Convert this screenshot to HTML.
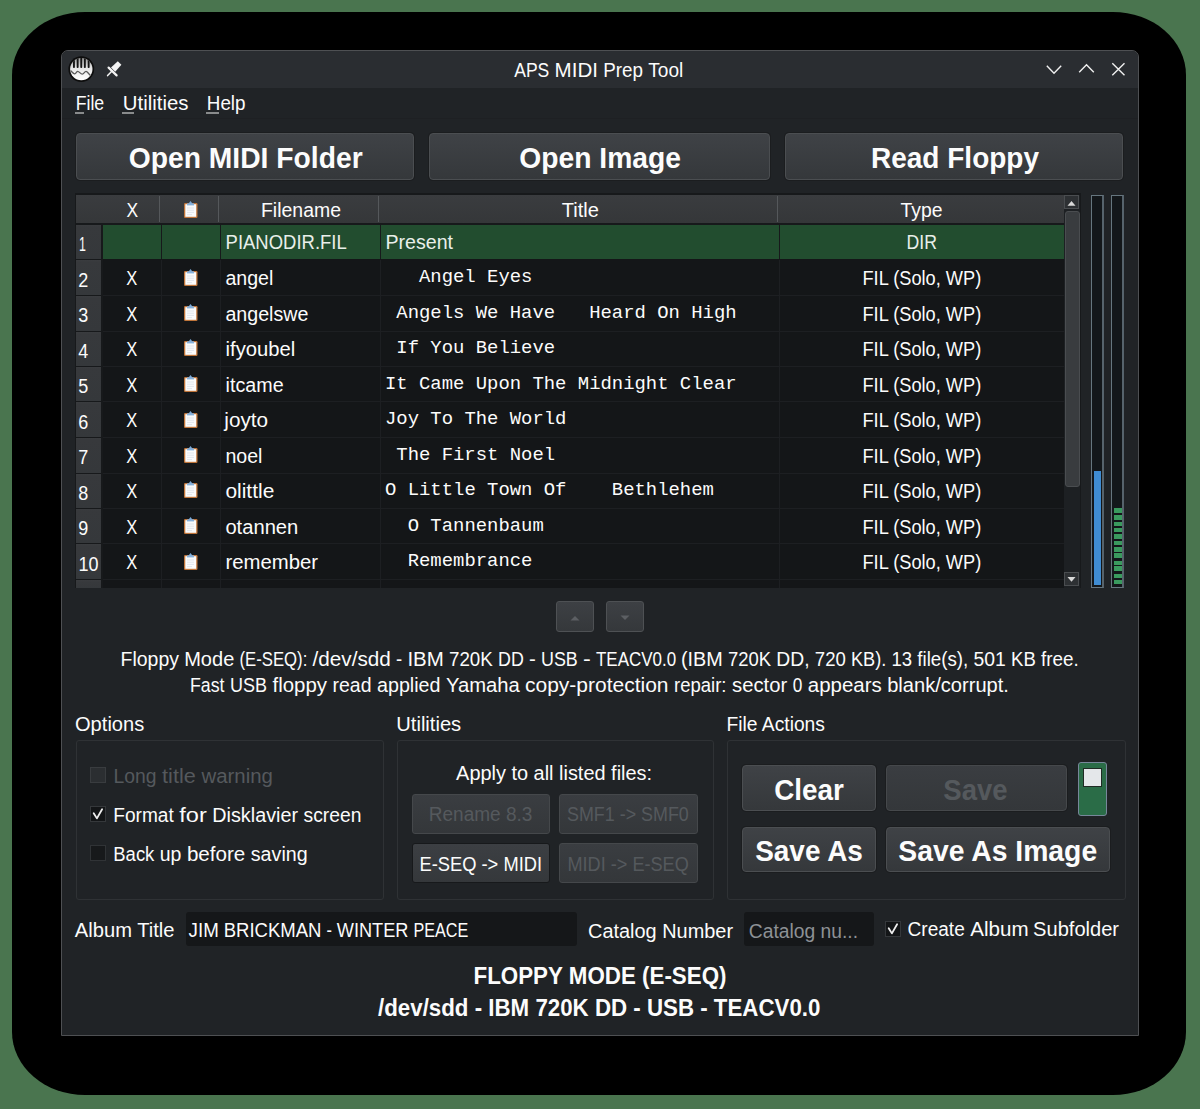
<!DOCTYPE html>
<html><head><meta charset="utf-8">
<style>
*{box-sizing:border-box;margin:0;padding:0}
html,body{width:1200px;height:1109px;overflow:hidden;background:#4a754f}
body{position:relative;font-family:"Liberation Sans",sans-serif}
.a{position:absolute}
svg text{white-space:pre}
</style></head><body>
<div class="a" style="left:12px;top:12px;width:1174px;height:1083px;background:#000;border-radius:73px/63px"></div>
<div class="a" style="left:61px;top:50px;width:1078px;height:986px;background:#202326;border:1px solid #4e5053;border-radius:7px 7px 0 0"></div>
<div class="a" style="left:62px;top:51px;width:1076px;height:37px;background:#2a2d31;border-radius:6px 6px 0 0"></div>
<div class="a" style="left:62px;top:118px;width:1076px;height:1px;background:#1e2023"></div>
<div class="a" style="left:75px;top:112px;width:9px;height:2px;background:#d0d0d0;opacity:0.6"></div>
<div class="a" style="left:122px;top:112px;width:12px;height:2px;background:#d0d0d0;opacity:0.6"></div>
<div class="a" style="left:206px;top:112px;width:13px;height:2px;background:#d0d0d0;opacity:0.6"></div>
<div class="a" style="left:76px;top:133px;width:338px;height:47px;border:1px solid #4b4e51;border-radius:4px;background:linear-gradient(#3f4246,#35383b);box-shadow:0 0 0 1px #1b1d1f"></div>
<div class="a" style="left:429px;top:133px;width:341px;height:47px;border:1px solid #4b4e51;border-radius:4px;background:linear-gradient(#3f4246,#35383b);box-shadow:0 0 0 1px #1b1d1f"></div>
<div class="a" style="left:785px;top:133px;width:338px;height:47px;border:1px solid #4b4e51;border-radius:4px;background:linear-gradient(#3f4246,#35383b);box-shadow:0 0 0 1px #1b1d1f"></div>
<div class="a" style="left:75px;top:193px;width:1006px;height:395px;background:#17191b"></div>
<div class="a" style="left:76px;top:195px;width:988px;height:28px;background:linear-gradient(#3a3c3f,#353739)"></div>
<div class="a" style="left:159px;top:196px;width:1px;height:26px;background:#55585b"></div>
<div class="a" style="left:218px;top:196px;width:1px;height:26px;background:#55585b"></div>
<div class="a" style="left:378px;top:196px;width:1px;height:26px;background:#55585b"></div>
<div class="a" style="left:777px;top:196px;width:1px;height:26px;background:#55585b"></div>
<div class="a" style="left:103px;top:225px;width:961px;height:363px;background:#141618"></div>
<div class="a" style="left:76px;top:225px;width:25px;height:34px;background:linear-gradient(#3a3c3f 0,#37393c 2px,#35383b)"></div>
<div class="a" style="left:103px;top:225px;width:961px;height:34px;background:#224d2f"></div>
<div class="a" style="left:161px;top:225px;width:1px;height:34px;background:#17191b"></div>
<div class="a" style="left:220px;top:225px;width:1px;height:34px;background:#17191b"></div>
<div class="a" style="left:380px;top:225px;width:1px;height:34px;background:#17191b"></div>
<div class="a" style="left:779px;top:225px;width:1px;height:34px;background:#17191b"></div>
<div class="a" style="left:76px;top:260px;width:25px;height:35px;background:linear-gradient(#3a3c3f 0,#37393c 2px,#35383b)"></div>
<div class="a" style="left:103px;top:295px;width:961px;height:1px;background:#1d1f22"></div>
<div class="a" style="left:161px;top:260px;width:1px;height:36px;background:#1d1f22"></div>
<div class="a" style="left:220px;top:260px;width:1px;height:36px;background:#1d1f22"></div>
<div class="a" style="left:380px;top:260px;width:1px;height:36px;background:#1d1f22"></div>
<div class="a" style="left:779px;top:260px;width:1px;height:36px;background:#1d1f22"></div>
<div class="a" style="left:76px;top:296px;width:25px;height:35px;background:linear-gradient(#3a3c3f 0,#37393c 2px,#35383b)"></div>
<div class="a" style="left:103px;top:331px;width:961px;height:1px;background:#1d1f22"></div>
<div class="a" style="left:161px;top:296px;width:1px;height:36px;background:#1d1f22"></div>
<div class="a" style="left:220px;top:296px;width:1px;height:36px;background:#1d1f22"></div>
<div class="a" style="left:380px;top:296px;width:1px;height:36px;background:#1d1f22"></div>
<div class="a" style="left:779px;top:296px;width:1px;height:36px;background:#1d1f22"></div>
<div class="a" style="left:76px;top:332px;width:25px;height:34px;background:linear-gradient(#3a3c3f 0,#37393c 2px,#35383b)"></div>
<div class="a" style="left:103px;top:366px;width:961px;height:1px;background:#1d1f22"></div>
<div class="a" style="left:161px;top:332px;width:1px;height:35px;background:#1d1f22"></div>
<div class="a" style="left:220px;top:332px;width:1px;height:35px;background:#1d1f22"></div>
<div class="a" style="left:380px;top:332px;width:1px;height:35px;background:#1d1f22"></div>
<div class="a" style="left:779px;top:332px;width:1px;height:35px;background:#1d1f22"></div>
<div class="a" style="left:76px;top:367px;width:25px;height:34px;background:linear-gradient(#3a3c3f 0,#37393c 2px,#35383b)"></div>
<div class="a" style="left:103px;top:401px;width:961px;height:1px;background:#1d1f22"></div>
<div class="a" style="left:161px;top:367px;width:1px;height:35px;background:#1d1f22"></div>
<div class="a" style="left:220px;top:367px;width:1px;height:35px;background:#1d1f22"></div>
<div class="a" style="left:380px;top:367px;width:1px;height:35px;background:#1d1f22"></div>
<div class="a" style="left:779px;top:367px;width:1px;height:35px;background:#1d1f22"></div>
<div class="a" style="left:76px;top:402px;width:25px;height:35px;background:linear-gradient(#3a3c3f 0,#37393c 2px,#35383b)"></div>
<div class="a" style="left:103px;top:437px;width:961px;height:1px;background:#1d1f22"></div>
<div class="a" style="left:161px;top:402px;width:1px;height:36px;background:#1d1f22"></div>
<div class="a" style="left:220px;top:402px;width:1px;height:36px;background:#1d1f22"></div>
<div class="a" style="left:380px;top:402px;width:1px;height:36px;background:#1d1f22"></div>
<div class="a" style="left:779px;top:402px;width:1px;height:36px;background:#1d1f22"></div>
<div class="a" style="left:76px;top:438px;width:25px;height:35px;background:linear-gradient(#3a3c3f 0,#37393c 2px,#35383b)"></div>
<div class="a" style="left:103px;top:473px;width:961px;height:1px;background:#1d1f22"></div>
<div class="a" style="left:161px;top:438px;width:1px;height:36px;background:#1d1f22"></div>
<div class="a" style="left:220px;top:438px;width:1px;height:36px;background:#1d1f22"></div>
<div class="a" style="left:380px;top:438px;width:1px;height:36px;background:#1d1f22"></div>
<div class="a" style="left:779px;top:438px;width:1px;height:36px;background:#1d1f22"></div>
<div class="a" style="left:76px;top:474px;width:25px;height:34px;background:linear-gradient(#3a3c3f 0,#37393c 2px,#35383b)"></div>
<div class="a" style="left:103px;top:508px;width:961px;height:1px;background:#1d1f22"></div>
<div class="a" style="left:161px;top:474px;width:1px;height:35px;background:#1d1f22"></div>
<div class="a" style="left:220px;top:474px;width:1px;height:35px;background:#1d1f22"></div>
<div class="a" style="left:380px;top:474px;width:1px;height:35px;background:#1d1f22"></div>
<div class="a" style="left:779px;top:474px;width:1px;height:35px;background:#1d1f22"></div>
<div class="a" style="left:76px;top:509px;width:25px;height:34px;background:linear-gradient(#3a3c3f 0,#37393c 2px,#35383b)"></div>
<div class="a" style="left:103px;top:543px;width:961px;height:1px;background:#1d1f22"></div>
<div class="a" style="left:161px;top:509px;width:1px;height:35px;background:#1d1f22"></div>
<div class="a" style="left:220px;top:509px;width:1px;height:35px;background:#1d1f22"></div>
<div class="a" style="left:380px;top:509px;width:1px;height:35px;background:#1d1f22"></div>
<div class="a" style="left:779px;top:509px;width:1px;height:35px;background:#1d1f22"></div>
<div class="a" style="left:76px;top:544px;width:25px;height:35px;background:linear-gradient(#3a3c3f 0,#37393c 2px,#35383b)"></div>
<div class="a" style="left:103px;top:579px;width:961px;height:1px;background:#1d1f22"></div>
<div class="a" style="left:161px;top:544px;width:1px;height:36px;background:#1d1f22"></div>
<div class="a" style="left:220px;top:544px;width:1px;height:36px;background:#1d1f22"></div>
<div class="a" style="left:380px;top:544px;width:1px;height:36px;background:#1d1f22"></div>
<div class="a" style="left:779px;top:544px;width:1px;height:36px;background:#1d1f22"></div>
<div class="a" style="left:76px;top:580px;width:25px;height:8px;background:linear-gradient(#3a3c3f 0,#37393c 2px,#35383b)"></div>
<div class="a" style="left:161px;top:580px;width:1px;height:8px;background:#1d1f22"></div>
<div class="a" style="left:220px;top:580px;width:1px;height:8px;background:#1d1f22"></div>
<div class="a" style="left:380px;top:580px;width:1px;height:8px;background:#1d1f22"></div>
<div class="a" style="left:779px;top:580px;width:1px;height:8px;background:#1d1f22"></div>
<div class="a" style="left:1064px;top:195px;width:16px;height:393px;background:#1d2023"></div>
<div class="a" style="left:1064px;top:195px;width:15px;height:14px;background:#2d3033;border:1px solid #4a4d50"></div>
<div class="a" style="left:1065px;top:211px;width:15px;height:276px;background:#393c3f;border:1px solid #4a4d50;border-radius:3px"></div>
<div class="a" style="left:1064px;top:572px;width:15px;height:14px;background:#2d3033;border:1px solid #4a4d50"></div>
<div class="a" style="left:1091px;top:195px;width:13px;height:393px;background:#13171a;border:1px solid #66767f;border-right:2px solid #56636c"></div>
<div class="a" style="left:1111px;top:195px;width:13px;height:393px;background:#13171a;border:1px solid #66767f;border-right:2px solid #56636c"></div>
<div class="a" style="left:1094px;top:471px;width:7px;height:114px;background:#3f8cd2"></div>
<div class="a" style="left:1114px;top:508px;width:8px;height:5px;background:#3a9a5e"></div>
<div class="a" style="left:1114px;top:515px;width:8px;height:5px;background:#3a9a5e"></div>
<div class="a" style="left:1114px;top:522px;width:8px;height:4px;background:#3a9a5e"></div>
<div class="a" style="left:1114px;top:528px;width:8px;height:4px;background:#3a9a5e"></div>
<div class="a" style="left:1114px;top:534px;width:8px;height:5px;background:#3a9a5e"></div>
<div class="a" style="left:1114px;top:541px;width:8px;height:4px;background:#3a9a5e"></div>
<div class="a" style="left:1114px;top:547px;width:8px;height:5px;background:#3a9a5e"></div>
<div class="a" style="left:1114px;top:553px;width:8px;height:5px;background:#3a9a5e"></div>
<div class="a" style="left:1114px;top:561px;width:8px;height:4px;background:#3a9a5e"></div>
<div class="a" style="left:1114px;top:566px;width:8px;height:5px;background:#3a9a5e"></div>
<div class="a" style="left:1114px;top:574px;width:8px;height:4px;background:#3a9a5e"></div>
<div class="a" style="left:1114px;top:580px;width:8px;height:4px;background:#3a9a5e"></div>
<div class="a" style="left:556px;top:601px;width:38px;height:31px;border:1px solid #4e5154;border-radius:3px;background:linear-gradient(#3d4044,#35383b)"></div>
<div class="a" style="left:606px;top:601px;width:38px;height:31px;border:1px solid #4e5154;border-radius:3px;background:linear-gradient(#3d4044,#35383b)"></div>
<div class="a" style="left:76px;top:740px;width:308px;height:160px;border:1px solid #2f3235;border-radius:3px"></div>
<div class="a" style="left:397px;top:740px;width:317px;height:160px;border:1px solid #2f3235;border-radius:3px"></div>
<div class="a" style="left:727px;top:740px;width:399px;height:160px;border:1px solid #2f3235;border-radius:3px"></div>
<div class="a" style="left:90px;top:767px;width:16px;height:16px;background:#2b2e31;border:1px solid #393c3f"></div>
<div class="a" style="left:90px;top:806px;width:16px;height:16px;background:#131517;border:1px solid #35383b"></div>
<div class="a" style="left:90px;top:845px;width:16px;height:16px;background:#17191b;border:1px solid #303336"></div>
<div class="a" style="left:412px;top:794px;width:138px;height:40px;border:1px solid #45484b;border-radius:3px;background:linear-gradient(#3a3d41,#34373a)"></div>
<div class="a" style="left:559px;top:794px;width:139px;height:40px;border:1px solid #45484b;border-radius:3px;background:linear-gradient(#3a3d41,#34373a)"></div>
<div class="a" style="left:412px;top:843px;width:138px;height:40px;border:1px solid #17191b;border-radius:3px;background:linear-gradient(#3c3f43,#35383b)"></div>
<div class="a" style="left:559px;top:843px;width:139px;height:40px;border:1px solid #45484b;border-radius:3px;background:linear-gradient(#3a3d41,#34373a)"></div>
<div class="a" style="left:742px;top:765px;width:134px;height:46px;border:1px solid #4b4e51;border-radius:4px;background:linear-gradient(#3f4246,#35383b);box-shadow:0 0 0 1px #1b1d1f"></div>
<div class="a" style="left:886px;top:765px;width:181px;height:46px;border:1px solid #45484b;border-radius:4px;background:linear-gradient(#3a3d41,#34373a);box-shadow:0 0 0 1px #1b1d1f"></div>
<div class="a" style="left:742px;top:827px;width:134px;height:45px;border:1px solid #4b4e51;border-radius:4px;background:linear-gradient(#3f4246,#35383b);box-shadow:0 0 0 1px #1b1d1f"></div>
<div class="a" style="left:886px;top:827px;width:224px;height:45px;border:1px solid #4b4e51;border-radius:4px;background:linear-gradient(#3f4246,#35383b);box-shadow:0 0 0 1px #1b1d1f"></div>
<div class="a" style="left:1078px;top:762px;width:29px;height:54px;background:#2a6c47;border:1px solid #77879a;border-radius:3px"></div>
<div class="a" style="left:1083px;top:768px;width:19px;height:19px;background:#e4e7ea;border:1px solid #1f2a24"></div>
<div class="a" style="left:186px;top:912px;width:391px;height:34px;background:#151719;border-radius:3px"></div>
<div class="a" style="left:744px;top:912px;width:130px;height:34px;background:#151719;border-radius:3px"></div>
<div class="a" style="left:885px;top:921px;width:16px;height:16px;background:#131517;border:1px solid #35383b"></div>
<svg class="a" style="left:67px;top:55px" width="28" height="28" viewBox="0 0 28 28">
<defs><linearGradient id="ig" x1="0" y1="0" x2="0" y2="1"><stop offset="0" stop-color="#9c9c9c"/><stop offset="0.45" stop-color="#e6e6e6"/><stop offset="1" stop-color="#ffffff"/></linearGradient>
<clipPath id="cp"><circle cx="14.3" cy="14.1" r="11.2"/></clipPath></defs>
<circle cx="14.3" cy="14.1" r="12.9" fill="#0d0d0d"/>
<circle cx="14.3" cy="14.1" r="11.2" fill="url(#ig)"/>
<g clip-path="url(#cp)" fill="#151515"><rect x="6" y="2" width="1.9" height="11" rx="0.8"/><rect x="9.7" y="2" width="1.9" height="11" rx="0.8"/><rect x="13.3" y="2" width="1.9" height="11" rx="0.8"/><rect x="16.9" y="2" width="1.9" height="11" rx="0.8"/><rect x="20.7" y="2" width="1.9" height="11" rx="0.8"/></g>
<path clip-path="url(#cp)" d="M3.5 15.5 C5.5 17.5 6.5 19 7.7 18.8 C9 18.6 9.5 16.3 10.8 16.3 C12.2 16.3 13.5 19.2 15.3 19.2 C17 19.2 17.5 16.3 19 16.3 C20.5 16.3 21.5 19 23.8 20.8" fill="none" stroke="#5a5a5a" stroke-width="1.3"/>
</svg>
<svg class="a" style="left:105px;top:59px" width="18" height="19" viewBox="0 0 18 19">
<path d="M7.3 11.7 L2.6 16.6" stroke="#f4f4f4" stroke-width="1.5" stroke-linecap="round"/>
<path d="M3.6 8.6 L11.6 16.4" stroke="#f4f4f4" stroke-width="2.2" stroke-linecap="round"/>
<path d="M12.8 2.2 L16.4 5.8 L10.2 12.8 L6 8.6 Z" fill="#f4f4f4"/>
</svg>
<svg class="a" style="left:1040px;top:58px" width="95" height="24" viewBox="0 0 95 24"><path d="M6.8 7.8 L14 15.3 L21.2 7.8" fill="none" stroke="#f0f0f0" stroke-width="1.4"/><path d="M39.2 14.2 L46.5 6.8 L53.8 14.2" fill="none" stroke="#f0f0f0" stroke-width="1.4"/><path d="M72.3 5.3 L84.5 17.3 M84.5 5.3 L72.3 17.3" fill="none" stroke="#f0f0f0" stroke-width="1.4"/></svg>
<svg class="a" style="left:183px;top:200px" width="15" height="19" viewBox="0 0 15 19">
<rect x="1" y="3" width="13.5" height="15" rx="1.2" fill="#c0753a"/>
<rect x="2.3" y="4.2" width="10.9" height="12.6" fill="#fbfbfb"/>
<path d="M4.5 5 L7.5 1 L10.5 5 Z" fill="#7aa7d6"/><rect x="4" y="3.4" width="7" height="2" fill="#86b1dc"/>
<g stroke="#d5dde6" stroke-width="0.7"><line x1="4" y1="8" x2="11" y2="8"/><line x1="4" y1="10.2" x2="11" y2="10.2"/><line x1="4" y1="12.4" x2="11" y2="12.4"/><line x1="4" y1="14.6" x2="9" y2="14.6"/></g>
</svg>
<svg class="a" style="left:183px;top:268px" width="15" height="19" viewBox="0 0 15 19">
<rect x="1" y="3" width="13.5" height="15" rx="1.2" fill="#c0753a"/>
<rect x="2.3" y="4.2" width="10.9" height="12.6" fill="#fbfbfb"/>
<path d="M4.5 5 L7.5 1 L10.5 5 Z" fill="#7aa7d6"/><rect x="4" y="3.4" width="7" height="2" fill="#86b1dc"/>
<g stroke="#d5dde6" stroke-width="0.7"><line x1="4" y1="8" x2="11" y2="8"/><line x1="4" y1="10.2" x2="11" y2="10.2"/><line x1="4" y1="12.4" x2="11" y2="12.4"/><line x1="4" y1="14.6" x2="9" y2="14.6"/></g>
</svg>
<svg class="a" style="left:183px;top:303px" width="15" height="19" viewBox="0 0 15 19">
<rect x="1" y="3" width="13.5" height="15" rx="1.2" fill="#c0753a"/>
<rect x="2.3" y="4.2" width="10.9" height="12.6" fill="#fbfbfb"/>
<path d="M4.5 5 L7.5 1 L10.5 5 Z" fill="#7aa7d6"/><rect x="4" y="3.4" width="7" height="2" fill="#86b1dc"/>
<g stroke="#d5dde6" stroke-width="0.7"><line x1="4" y1="8" x2="11" y2="8"/><line x1="4" y1="10.2" x2="11" y2="10.2"/><line x1="4" y1="12.4" x2="11" y2="12.4"/><line x1="4" y1="14.6" x2="9" y2="14.6"/></g>
</svg>
<svg class="a" style="left:183px;top:338px" width="15" height="19" viewBox="0 0 15 19">
<rect x="1" y="3" width="13.5" height="15" rx="1.2" fill="#c0753a"/>
<rect x="2.3" y="4.2" width="10.9" height="12.6" fill="#fbfbfb"/>
<path d="M4.5 5 L7.5 1 L10.5 5 Z" fill="#7aa7d6"/><rect x="4" y="3.4" width="7" height="2" fill="#86b1dc"/>
<g stroke="#d5dde6" stroke-width="0.7"><line x1="4" y1="8" x2="11" y2="8"/><line x1="4" y1="10.2" x2="11" y2="10.2"/><line x1="4" y1="12.4" x2="11" y2="12.4"/><line x1="4" y1="14.6" x2="9" y2="14.6"/></g>
</svg>
<svg class="a" style="left:183px;top:374px" width="15" height="19" viewBox="0 0 15 19">
<rect x="1" y="3" width="13.5" height="15" rx="1.2" fill="#c0753a"/>
<rect x="2.3" y="4.2" width="10.9" height="12.6" fill="#fbfbfb"/>
<path d="M4.5 5 L7.5 1 L10.5 5 Z" fill="#7aa7d6"/><rect x="4" y="3.4" width="7" height="2" fill="#86b1dc"/>
<g stroke="#d5dde6" stroke-width="0.7"><line x1="4" y1="8" x2="11" y2="8"/><line x1="4" y1="10.2" x2="11" y2="10.2"/><line x1="4" y1="12.4" x2="11" y2="12.4"/><line x1="4" y1="14.6" x2="9" y2="14.6"/></g>
</svg>
<svg class="a" style="left:183px;top:410px" width="15" height="19" viewBox="0 0 15 19">
<rect x="1" y="3" width="13.5" height="15" rx="1.2" fill="#c0753a"/>
<rect x="2.3" y="4.2" width="10.9" height="12.6" fill="#fbfbfb"/>
<path d="M4.5 5 L7.5 1 L10.5 5 Z" fill="#7aa7d6"/><rect x="4" y="3.4" width="7" height="2" fill="#86b1dc"/>
<g stroke="#d5dde6" stroke-width="0.7"><line x1="4" y1="8" x2="11" y2="8"/><line x1="4" y1="10.2" x2="11" y2="10.2"/><line x1="4" y1="12.4" x2="11" y2="12.4"/><line x1="4" y1="14.6" x2="9" y2="14.6"/></g>
</svg>
<svg class="a" style="left:183px;top:445px" width="15" height="19" viewBox="0 0 15 19">
<rect x="1" y="3" width="13.5" height="15" rx="1.2" fill="#c0753a"/>
<rect x="2.3" y="4.2" width="10.9" height="12.6" fill="#fbfbfb"/>
<path d="M4.5 5 L7.5 1 L10.5 5 Z" fill="#7aa7d6"/><rect x="4" y="3.4" width="7" height="2" fill="#86b1dc"/>
<g stroke="#d5dde6" stroke-width="0.7"><line x1="4" y1="8" x2="11" y2="8"/><line x1="4" y1="10.2" x2="11" y2="10.2"/><line x1="4" y1="12.4" x2="11" y2="12.4"/><line x1="4" y1="14.6" x2="9" y2="14.6"/></g>
</svg>
<svg class="a" style="left:183px;top:480px" width="15" height="19" viewBox="0 0 15 19">
<rect x="1" y="3" width="13.5" height="15" rx="1.2" fill="#c0753a"/>
<rect x="2.3" y="4.2" width="10.9" height="12.6" fill="#fbfbfb"/>
<path d="M4.5 5 L7.5 1 L10.5 5 Z" fill="#7aa7d6"/><rect x="4" y="3.4" width="7" height="2" fill="#86b1dc"/>
<g stroke="#d5dde6" stroke-width="0.7"><line x1="4" y1="8" x2="11" y2="8"/><line x1="4" y1="10.2" x2="11" y2="10.2"/><line x1="4" y1="12.4" x2="11" y2="12.4"/><line x1="4" y1="14.6" x2="9" y2="14.6"/></g>
</svg>
<svg class="a" style="left:183px;top:516px" width="15" height="19" viewBox="0 0 15 19">
<rect x="1" y="3" width="13.5" height="15" rx="1.2" fill="#c0753a"/>
<rect x="2.3" y="4.2" width="10.9" height="12.6" fill="#fbfbfb"/>
<path d="M4.5 5 L7.5 1 L10.5 5 Z" fill="#7aa7d6"/><rect x="4" y="3.4" width="7" height="2" fill="#86b1dc"/>
<g stroke="#d5dde6" stroke-width="0.7"><line x1="4" y1="8" x2="11" y2="8"/><line x1="4" y1="10.2" x2="11" y2="10.2"/><line x1="4" y1="12.4" x2="11" y2="12.4"/><line x1="4" y1="14.6" x2="9" y2="14.6"/></g>
</svg>
<svg class="a" style="left:183px;top:552px" width="15" height="19" viewBox="0 0 15 19">
<rect x="1" y="3" width="13.5" height="15" rx="1.2" fill="#c0753a"/>
<rect x="2.3" y="4.2" width="10.9" height="12.6" fill="#fbfbfb"/>
<path d="M4.5 5 L7.5 1 L10.5 5 Z" fill="#7aa7d6"/><rect x="4" y="3.4" width="7" height="2" fill="#86b1dc"/>
<g stroke="#d5dde6" stroke-width="0.7"><line x1="4" y1="8" x2="11" y2="8"/><line x1="4" y1="10.2" x2="11" y2="10.2"/><line x1="4" y1="12.4" x2="11" y2="12.4"/><line x1="4" y1="14.6" x2="9" y2="14.6"/></g>
</svg>
<svg class="a" style="left:1064px;top:195px" width="15" height="14"><path d="M3.5 10.8 L7.5 6 L11.5 10.8 Z" fill="#d9d9d9"/></svg>
<svg class="a" style="left:1064px;top:572px" width="15" height="14"><path d="M3.5 5 L7.5 9.8 L11.5 5 Z" fill="#d9d9d9"/></svg>
<svg class="a" style="left:556px;top:601px" width="88" height="31"><path d="M14.5 19.5 L19 15 L23.5 19.5 Z" fill="#5c5f63"/><path d="M64.5 14.5 L69 19 L73.5 14.5 Z" fill="#5c5f63"/></svg>
<svg class="a" style="left:90px;top:806px" width="16" height="16"><path d="M3.7 7.2 L6.9 12.4 L12.1 3.3" fill="none" stroke="#eeeeee" stroke-width="1.8" stroke-linecap="round" stroke-linejoin="round"/></svg>
<svg class="a" style="left:885px;top:921px" width="16" height="16"><path d="M3.7 7.2 L6.9 12.4 L12.1 3.3" fill="none" stroke="#eeeeee" stroke-width="1.8" stroke-linecap="round" stroke-linejoin="round"/></svg>
<svg class="a" style="left:0;top:0" width="1200" height="1109">
<text x="514.20" y="77.10" font-family="Liberation Sans" font-size="20.5" fill="#fcfcfc" textLength="35.11" lengthAdjust="spacingAndGlyphs">APS</text>
<text x="554.60" y="77.10" font-family="Liberation Sans" font-size="20.5" fill="#fcfcfc" textLength="43.41" lengthAdjust="spacingAndGlyphs">MIDI</text>
<text x="603.30" y="77.10" font-family="Liberation Sans" font-size="20.5" fill="#fcfcfc" textLength="39.71" lengthAdjust="spacingAndGlyphs">Prep</text>
<text x="648.30" y="77.10" font-family="Liberation Sans" font-size="20.5" fill="#fcfcfc" textLength="34.99" lengthAdjust="spacingAndGlyphs">Tool</text>
<text x="75.70" y="109.80" font-family="Liberation Sans" font-size="19.6" fill="#fcfcfc" textLength="28.52" lengthAdjust="spacingAndGlyphs">File</text>
<text x="122.80" y="109.80" font-family="Liberation Sans" font-size="19.6" fill="#fcfcfc" textLength="65.65" lengthAdjust="spacingAndGlyphs">Utilities</text>
<text x="206.80" y="109.80" font-family="Liberation Sans" font-size="19.6" fill="#fcfcfc" textLength="38.73" lengthAdjust="spacingAndGlyphs">Help</text>
<text x="128.75" y="167.80" font-family="Liberation Sans" font-size="29.8" font-weight="bold" fill="#fcfcfc" textLength="233.89" lengthAdjust="spacingAndGlyphs">Open MIDI Folder</text>
<text x="519.30" y="167.80" font-family="Liberation Sans" font-size="29.8" font-weight="bold" fill="#fcfcfc" textLength="161.66" lengthAdjust="spacingAndGlyphs">Open Image</text>
<text x="871.00" y="167.80" font-family="Liberation Sans" font-size="29.8" font-weight="bold" fill="#fcfcfc" textLength="168.02" lengthAdjust="spacingAndGlyphs">Read Floppy</text>
<text x="126.40" y="217.40" font-family="Liberation Sans" font-size="19.6" fill="#fcfcfc" textLength="11.64" lengthAdjust="spacingAndGlyphs">X</text>
<text x="261.00" y="217.40" font-family="Liberation Sans" font-size="19.6" fill="#fcfcfc" textLength="79.96" lengthAdjust="spacingAndGlyphs">Filename</text>
<text x="561.70" y="217.40" font-family="Liberation Sans" font-size="19.6" fill="#fcfcfc" textLength="37.14" lengthAdjust="spacingAndGlyphs">Title</text>
<text x="900.50" y="217.40" font-family="Liberation Sans" font-size="19.6" fill="#fcfcfc" textLength="41.96" lengthAdjust="spacingAndGlyphs">Type</text>
<text x="79.00" y="251.00" font-family="Liberation Sans" font-size="19.6" fill="#fcfcfc" textLength="6.91" lengthAdjust="spacingAndGlyphs">1</text>
<text x="225.60" y="249.00" font-family="Liberation Sans" font-size="19.6" fill="#e9efea" textLength="121.13" lengthAdjust="spacingAndGlyphs">PIANODIR.FIL</text>
<text x="385.50" y="249.00" font-family="Liberation Sans" font-size="19.6" fill="#e9efea" textLength="67.55" lengthAdjust="spacingAndGlyphs">Present</text>
<text x="906.50" y="249.00" font-family="Liberation Sans" font-size="19.6" fill="#e9efea" textLength="30.44" lengthAdjust="spacingAndGlyphs">DIR</text>
<text x="78.30" y="286.50" font-family="Liberation Sans" font-size="19.6" fill="#fcfcfc" textLength="10.02" lengthAdjust="spacingAndGlyphs">2</text>
<text x="126.30" y="285.00" font-family="Liberation Sans" font-size="19.6" fill="#fcfcfc" textLength="11.03" lengthAdjust="spacingAndGlyphs">X</text>
<text x="225.40" y="285.00" font-family="Liberation Sans" font-size="19.6" fill="#fcfcfc" textLength="47.94" lengthAdjust="spacingAndGlyphs">angel</text>
<text x="419.02" y="282.30" font-family="Liberation Mono" font-size="18.9" fill="#fcfcfc" textLength="113.41" lengthAdjust="spacingAndGlyphs">Angel Eyes</text>
<text x="862.50" y="285.00" font-family="Liberation Sans" font-size="19.6" fill="#fcfcfc" textLength="118.74" lengthAdjust="spacingAndGlyphs">FIL (Solo, WP)</text>
<text x="78.30" y="322.00" font-family="Liberation Sans" font-size="19.6" fill="#fcfcfc" textLength="10.02" lengthAdjust="spacingAndGlyphs">3</text>
<text x="126.30" y="320.50" font-family="Liberation Sans" font-size="19.6" fill="#fcfcfc" textLength="11.03" lengthAdjust="spacingAndGlyphs">X</text>
<text x="225.40" y="320.50" font-family="Liberation Sans" font-size="19.6" fill="#fcfcfc" textLength="83.00" lengthAdjust="spacingAndGlyphs">angelswe</text>
<text x="396.34" y="317.80" font-family="Liberation Mono" font-size="18.9" fill="#fcfcfc" textLength="340.24" lengthAdjust="spacingAndGlyphs">Angels We Have   Heard On High</text>
<text x="862.50" y="320.50" font-family="Liberation Sans" font-size="19.6" fill="#fcfcfc" textLength="118.74" lengthAdjust="spacingAndGlyphs">FIL (Solo, WP)</text>
<text x="78.30" y="357.50" font-family="Liberation Sans" font-size="19.6" fill="#fcfcfc" textLength="10.02" lengthAdjust="spacingAndGlyphs">4</text>
<text x="126.30" y="356.00" font-family="Liberation Sans" font-size="19.6" fill="#fcfcfc" textLength="11.03" lengthAdjust="spacingAndGlyphs">X</text>
<text x="225.60" y="356.00" font-family="Liberation Sans" font-size="19.6" fill="#fcfcfc" textLength="69.74" lengthAdjust="spacingAndGlyphs">ifyoubel</text>
<text x="396.34" y="353.30" font-family="Liberation Mono" font-size="18.9" fill="#fcfcfc" textLength="158.78" lengthAdjust="spacingAndGlyphs">If You Believe</text>
<text x="862.50" y="356.00" font-family="Liberation Sans" font-size="19.6" fill="#fcfcfc" textLength="118.74" lengthAdjust="spacingAndGlyphs">FIL (Solo, WP)</text>
<text x="78.30" y="393.00" font-family="Liberation Sans" font-size="19.6" fill="#fcfcfc" textLength="10.02" lengthAdjust="spacingAndGlyphs">5</text>
<text x="126.30" y="391.50" font-family="Liberation Sans" font-size="19.6" fill="#fcfcfc" textLength="11.03" lengthAdjust="spacingAndGlyphs">X</text>
<text x="225.60" y="391.50" font-family="Liberation Sans" font-size="19.6" fill="#fcfcfc" textLength="58.01" lengthAdjust="spacingAndGlyphs">itcame</text>
<text x="385.00" y="388.80" font-family="Liberation Mono" font-size="18.9" fill="#fcfcfc" textLength="351.59" lengthAdjust="spacingAndGlyphs">It Came Upon The Midnight Clear</text>
<text x="862.50" y="391.50" font-family="Liberation Sans" font-size="19.6" fill="#fcfcfc" textLength="118.74" lengthAdjust="spacingAndGlyphs">FIL (Solo, WP)</text>
<text x="78.30" y="428.50" font-family="Liberation Sans" font-size="19.6" fill="#fcfcfc" textLength="10.02" lengthAdjust="spacingAndGlyphs">6</text>
<text x="126.30" y="427.00" font-family="Liberation Sans" font-size="19.6" fill="#fcfcfc" textLength="11.03" lengthAdjust="spacingAndGlyphs">X</text>
<text x="224.32" y="427.00" font-family="Liberation Sans" font-size="19.6" fill="#fcfcfc" textLength="43.73" lengthAdjust="spacingAndGlyphs">joyto</text>
<text x="385.00" y="424.30" font-family="Liberation Mono" font-size="18.9" fill="#fcfcfc" textLength="181.46" lengthAdjust="spacingAndGlyphs">Joy To The World</text>
<text x="862.50" y="427.00" font-family="Liberation Sans" font-size="19.6" fill="#fcfcfc" textLength="118.74" lengthAdjust="spacingAndGlyphs">FIL (Solo, WP)</text>
<text x="78.30" y="464.00" font-family="Liberation Sans" font-size="19.6" fill="#fcfcfc" textLength="10.02" lengthAdjust="spacingAndGlyphs">7</text>
<text x="126.30" y="462.50" font-family="Liberation Sans" font-size="19.6" fill="#fcfcfc" textLength="11.03" lengthAdjust="spacingAndGlyphs">X</text>
<text x="225.40" y="462.50" font-family="Liberation Sans" font-size="19.6" fill="#fcfcfc" textLength="37.01" lengthAdjust="spacingAndGlyphs">noel</text>
<text x="396.34" y="459.80" font-family="Liberation Mono" font-size="18.9" fill="#fcfcfc" textLength="158.78" lengthAdjust="spacingAndGlyphs">The First Noel</text>
<text x="862.50" y="462.50" font-family="Liberation Sans" font-size="19.6" fill="#fcfcfc" textLength="118.74" lengthAdjust="spacingAndGlyphs">FIL (Solo, WP)</text>
<text x="78.30" y="499.50" font-family="Liberation Sans" font-size="19.6" fill="#fcfcfc" textLength="10.02" lengthAdjust="spacingAndGlyphs">8</text>
<text x="126.30" y="498.00" font-family="Liberation Sans" font-size="19.6" fill="#fcfcfc" textLength="11.03" lengthAdjust="spacingAndGlyphs">X</text>
<text x="225.40" y="498.00" font-family="Liberation Sans" font-size="19.6" fill="#fcfcfc" textLength="48.89" lengthAdjust="spacingAndGlyphs">olittle</text>
<text x="385.00" y="495.30" font-family="Liberation Mono" font-size="18.9" fill="#fcfcfc" textLength="328.90" lengthAdjust="spacingAndGlyphs">O Little Town Of    Bethlehem</text>
<text x="862.50" y="498.00" font-family="Liberation Sans" font-size="19.6" fill="#fcfcfc" textLength="118.74" lengthAdjust="spacingAndGlyphs">FIL (Solo, WP)</text>
<text x="78.30" y="535.00" font-family="Liberation Sans" font-size="19.6" fill="#fcfcfc" textLength="10.02" lengthAdjust="spacingAndGlyphs">9</text>
<text x="126.30" y="533.50" font-family="Liberation Sans" font-size="19.6" fill="#fcfcfc" textLength="11.03" lengthAdjust="spacingAndGlyphs">X</text>
<text x="225.40" y="533.50" font-family="Liberation Sans" font-size="19.6" fill="#fcfcfc" textLength="72.90" lengthAdjust="spacingAndGlyphs">otannen</text>
<text x="407.68" y="530.80" font-family="Liberation Mono" font-size="18.9" fill="#fcfcfc" textLength="136.10" lengthAdjust="spacingAndGlyphs">O Tannenbaum</text>
<text x="862.50" y="533.50" font-family="Liberation Sans" font-size="19.6" fill="#fcfcfc" textLength="118.74" lengthAdjust="spacingAndGlyphs">FIL (Solo, WP)</text>
<text x="78.50" y="570.50" font-family="Liberation Sans" font-size="19.6" fill="#fcfcfc" textLength="20.04" lengthAdjust="spacingAndGlyphs">10</text>
<text x="126.30" y="569.00" font-family="Liberation Sans" font-size="19.6" fill="#fcfcfc" textLength="11.03" lengthAdjust="spacingAndGlyphs">X</text>
<text x="225.40" y="569.00" font-family="Liberation Sans" font-size="19.6" fill="#fcfcfc" textLength="92.64" lengthAdjust="spacingAndGlyphs">remember</text>
<text x="407.68" y="566.30" font-family="Liberation Mono" font-size="18.9" fill="#fcfcfc" textLength="124.76" lengthAdjust="spacingAndGlyphs">Remembrance</text>
<text x="862.50" y="569.00" font-family="Liberation Sans" font-size="19.6" fill="#fcfcfc" textLength="118.74" lengthAdjust="spacingAndGlyphs">FIL (Solo, WP)</text>
<text x="120.60" y="665.60" font-family="Liberation Sans" font-size="19.3" fill="#fcfcfc" textLength="58.39" lengthAdjust="spacingAndGlyphs">Floppy</text>
<text x="184.20" y="665.60" font-family="Liberation Sans" font-size="19.3" fill="#fcfcfc" textLength="50.09" lengthAdjust="spacingAndGlyphs">Mode</text>
<text x="239.50" y="665.60" font-family="Liberation Sans" font-size="19.3" fill="#fcfcfc" textLength="67.79" lengthAdjust="spacingAndGlyphs">(E-SEQ):</text>
<text x="312.50" y="665.60" font-family="Liberation Sans" font-size="19.3" fill="#fcfcfc" textLength="78.29" lengthAdjust="spacingAndGlyphs">/dev/sdd</text>
<text x="396.00" y="665.60" font-family="Liberation Sans" font-size="19.3" fill="#fcfcfc" textLength="6.19" lengthAdjust="spacingAndGlyphs">-</text>
<text x="407.40" y="665.60" font-family="Liberation Sans" font-size="19.3" fill="#fcfcfc" textLength="36.39" lengthAdjust="spacingAndGlyphs">IBM</text>
<text x="449.00" y="665.60" font-family="Liberation Sans" font-size="19.3" fill="#fcfcfc" textLength="43.79" lengthAdjust="spacingAndGlyphs">720K</text>
<text x="498.00" y="665.60" font-family="Liberation Sans" font-size="19.3" fill="#fcfcfc" textLength="25.79" lengthAdjust="spacingAndGlyphs">DD</text>
<text x="529.00" y="665.60" font-family="Liberation Sans" font-size="19.3" fill="#fcfcfc" textLength="6.79" lengthAdjust="spacingAndGlyphs">-</text>
<text x="541.00" y="665.60" font-family="Liberation Sans" font-size="19.3" fill="#fcfcfc" textLength="36.79" lengthAdjust="spacingAndGlyphs">USB</text>
<text x="583.00" y="665.60" font-family="Liberation Sans" font-size="19.3" fill="#fcfcfc" textLength="7.78" lengthAdjust="spacingAndGlyphs">-</text>
<text x="596.00" y="665.60" font-family="Liberation Sans" font-size="19.3" fill="#fcfcfc" textLength="80.13" lengthAdjust="spacingAndGlyphs">TEACV0.0</text>
<text x="681.00" y="665.60" font-family="Liberation Sans" font-size="19.3" fill="#fcfcfc" textLength="41.79" lengthAdjust="spacingAndGlyphs">(IBM</text>
<text x="728.00" y="665.60" font-family="Liberation Sans" font-size="19.3" fill="#fcfcfc" textLength="43.09" lengthAdjust="spacingAndGlyphs">720K</text>
<text x="776.30" y="665.60" font-family="Liberation Sans" font-size="19.3" fill="#fcfcfc" textLength="33.29" lengthAdjust="spacingAndGlyphs">DD,</text>
<text x="814.80" y="665.60" font-family="Liberation Sans" font-size="19.3" fill="#fcfcfc" textLength="30.99" lengthAdjust="spacingAndGlyphs">720</text>
<text x="851.00" y="665.60" font-family="Liberation Sans" font-size="19.3" fill="#fcfcfc" textLength="35.29" lengthAdjust="spacingAndGlyphs">KB).</text>
<text x="891.50" y="665.60" font-family="Liberation Sans" font-size="19.3" fill="#fcfcfc" textLength="20.59" lengthAdjust="spacingAndGlyphs">13</text>
<text x="917.30" y="665.60" font-family="Liberation Sans" font-size="19.3" fill="#fcfcfc" textLength="50.99" lengthAdjust="spacingAndGlyphs">file(s),</text>
<text x="973.50" y="665.60" font-family="Liberation Sans" font-size="19.3" fill="#fcfcfc" textLength="32.29" lengthAdjust="spacingAndGlyphs">501</text>
<text x="1011.00" y="665.60" font-family="Liberation Sans" font-size="19.3" fill="#fcfcfc" textLength="24.79" lengthAdjust="spacingAndGlyphs">KB</text>
<text x="1041.00" y="665.60" font-family="Liberation Sans" font-size="19.3" fill="#fcfcfc" textLength="37.77" lengthAdjust="spacingAndGlyphs">free.</text>
<text x="190.00" y="692.00" font-family="Liberation Sans" font-size="19.3" fill="#fcfcfc" textLength="34.48" lengthAdjust="spacingAndGlyphs">Fast</text>
<text x="230.00" y="692.00" font-family="Liberation Sans" font-size="19.3" fill="#fcfcfc" textLength="36.98" lengthAdjust="spacingAndGlyphs">USB</text>
<text x="272.50" y="692.00" font-family="Liberation Sans" font-size="19.3" fill="#fcfcfc" textLength="54.48" lengthAdjust="spacingAndGlyphs">floppy</text>
<text x="332.50" y="692.00" font-family="Liberation Sans" font-size="19.3" fill="#fcfcfc" textLength="38.98" lengthAdjust="spacingAndGlyphs">read</text>
<text x="377.00" y="692.00" font-family="Liberation Sans" font-size="19.3" fill="#fcfcfc" textLength="63.48" lengthAdjust="spacingAndGlyphs">applied</text>
<text x="446.00" y="692.00" font-family="Liberation Sans" font-size="19.3" fill="#fcfcfc" textLength="73.84" lengthAdjust="spacingAndGlyphs">Yamaha</text>
<text x="525.00" y="692.00" font-family="Liberation Sans" font-size="19.3" fill="#fcfcfc" textLength="143.48" lengthAdjust="spacingAndGlyphs">copy-protection</text>
<text x="674.00" y="692.00" font-family="Liberation Sans" font-size="19.3" fill="#fcfcfc" textLength="52.48" lengthAdjust="spacingAndGlyphs">repair:</text>
<text x="732.00" y="692.00" font-family="Liberation Sans" font-size="19.3" fill="#fcfcfc" textLength="55.18" lengthAdjust="spacingAndGlyphs">sector</text>
<text x="792.70" y="692.00" font-family="Liberation Sans" font-size="19.3" fill="#fcfcfc" textLength="9.58" lengthAdjust="spacingAndGlyphs">0</text>
<text x="807.80" y="692.00" font-family="Liberation Sans" font-size="19.3" fill="#fcfcfc" textLength="73.88" lengthAdjust="spacingAndGlyphs">appears</text>
<text x="887.20" y="692.00" font-family="Liberation Sans" font-size="19.3" fill="#fcfcfc" textLength="121.77" lengthAdjust="spacingAndGlyphs">blank/corrupt.</text>
<text x="75.00" y="731.20" font-family="Liberation Sans" font-size="19.6" fill="#fcfcfc" textLength="69.23" lengthAdjust="spacingAndGlyphs">Options</text>
<text x="396.25" y="731.20" font-family="Liberation Sans" font-size="19.6" fill="#fcfcfc" textLength="64.95" lengthAdjust="spacingAndGlyphs">Utilities</text>
<text x="726.50" y="731.20" font-family="Liberation Sans" font-size="19.6" fill="#fcfcfc" textLength="98.47" lengthAdjust="spacingAndGlyphs">File Actions</text>
<text x="113.50" y="782.60" font-family="Liberation Sans" font-size="19.6" fill="#55595d" textLength="42.95" lengthAdjust="spacingAndGlyphs">Long</text>
<text x="162.10" y="782.60" font-family="Liberation Sans" font-size="19.6" fill="#55595d" textLength="33.75" lengthAdjust="spacingAndGlyphs">title</text>
<text x="201.50" y="782.60" font-family="Liberation Sans" font-size="19.6" fill="#55595d" textLength="71.44" lengthAdjust="spacingAndGlyphs">warning</text>
<text x="113.30" y="822.20" font-family="Liberation Sans" font-size="19.6" fill="#fcfcfc" textLength="60.49" lengthAdjust="spacingAndGlyphs">Format</text>
<text x="179.30" y="822.20" font-family="Liberation Sans" font-size="19.6" fill="#fcfcfc" textLength="27.50" lengthAdjust="spacingAndGlyphs">for</text>
<text x="212.30" y="822.20" font-family="Liberation Sans" font-size="19.6" fill="#fcfcfc" textLength="85.69" lengthAdjust="spacingAndGlyphs">Disklavier</text>
<text x="303.50" y="822.20" font-family="Liberation Sans" font-size="19.6" fill="#fcfcfc" textLength="57.93" lengthAdjust="spacingAndGlyphs">screen</text>
<text x="113.30" y="861.20" font-family="Liberation Sans" font-size="19.6" fill="#fcfcfc" textLength="41.05" lengthAdjust="spacingAndGlyphs">Back</text>
<text x="159.80" y="861.20" font-family="Liberation Sans" font-size="19.6" fill="#fcfcfc" textLength="21.64" lengthAdjust="spacingAndGlyphs">up</text>
<text x="186.90" y="861.20" font-family="Liberation Sans" font-size="19.6" fill="#fcfcfc" textLength="58.45" lengthAdjust="spacingAndGlyphs">before</text>
<text x="250.80" y="861.20" font-family="Liberation Sans" font-size="19.6" fill="#fcfcfc" textLength="56.81" lengthAdjust="spacingAndGlyphs">saving</text>
<text x="456.10" y="779.50" font-family="Liberation Sans" font-size="19.6" fill="#fcfcfc" textLength="195.96" lengthAdjust="spacingAndGlyphs">Apply to all listed files:</text>
<text x="428.75" y="821.25" font-family="Liberation Sans" font-size="19.6" fill="#55595d" textLength="103.71" lengthAdjust="spacingAndGlyphs">Rename 8.3</text>
<text x="567.00" y="821.25" font-family="Liberation Sans" font-size="19.6" fill="#55595d" textLength="121.78" lengthAdjust="spacingAndGlyphs">SMF1 -&gt; SMF0</text>
<text x="419.50" y="871.25" font-family="Liberation Sans" font-size="19.6" fill="#fcfcfc" textLength="122.51" lengthAdjust="spacingAndGlyphs">E-SEQ -&gt; MIDI</text>
<text x="567.50" y="871.25" font-family="Liberation Sans" font-size="19.6" fill="#55595d" textLength="121.26" lengthAdjust="spacingAndGlyphs">MIDI -&gt; E-SEQ</text>
<text x="774.20" y="799.60" font-family="Liberation Sans" font-size="29" font-weight="bold" fill="#fcfcfc" textLength="69.74" lengthAdjust="spacingAndGlyphs">Clear</text>
<text x="943.30" y="799.60" font-family="Liberation Sans" font-size="29" font-weight="bold" fill="#55595d" textLength="64.32" lengthAdjust="spacingAndGlyphs">Save</text>
<text x="755.20" y="860.70" font-family="Liberation Sans" font-size="29" font-weight="bold" fill="#fcfcfc" textLength="107.69" lengthAdjust="spacingAndGlyphs">Save As</text>
<text x="898.30" y="860.70" font-family="Liberation Sans" font-size="29" font-weight="bold" fill="#fcfcfc" textLength="198.83" lengthAdjust="spacingAndGlyphs">Save As Image</text>
<text x="74.80" y="937.40" font-family="Liberation Sans" font-size="19.6" fill="#fcfcfc" textLength="99.73" lengthAdjust="spacingAndGlyphs">Album Title</text>
<text x="188.60" y="936.80" font-family="Liberation Sans" font-size="19.6" fill="#fcfcfc" textLength="30.14" lengthAdjust="spacingAndGlyphs">JIM</text>
<text x="223.70" y="936.80" font-family="Liberation Sans" font-size="19.6" fill="#fcfcfc" textLength="97.74" lengthAdjust="spacingAndGlyphs">BRICKMAN</text>
<text x="326.40" y="936.80" font-family="Liberation Sans" font-size="19.6" fill="#fcfcfc" textLength="5.45" lengthAdjust="spacingAndGlyphs">-</text>
<text x="336.80" y="936.80" font-family="Liberation Sans" font-size="19.6" fill="#fcfcfc" textLength="71.64" lengthAdjust="spacingAndGlyphs">WINTER</text>
<text x="413.40" y="936.80" font-family="Liberation Sans" font-size="19.6" fill="#fcfcfc" textLength="54.81" lengthAdjust="spacingAndGlyphs">PEACE</text>
<text x="588.00" y="938.00" font-family="Liberation Sans" font-size="19.6" fill="#fcfcfc" textLength="145.03" lengthAdjust="spacingAndGlyphs">Catalog Number</text>
<text x="748.75" y="938.00" font-family="Liberation Sans" font-size="19.6" fill="#8d9195" textLength="109.26" lengthAdjust="spacingAndGlyphs">Catalog nu...</text>
<text x="907.50" y="936.40" font-family="Liberation Sans" font-size="19.6" fill="#fcfcfc" textLength="57.27" lengthAdjust="spacingAndGlyphs">Create</text>
<text x="970.30" y="936.40" font-family="Liberation Sans" font-size="19.6" fill="#fcfcfc" textLength="58.37" lengthAdjust="spacingAndGlyphs">Album</text>
<text x="1033.10" y="936.40" font-family="Liberation Sans" font-size="19.6" fill="#fcfcfc" textLength="85.92" lengthAdjust="spacingAndGlyphs">Subfolder</text>
<text x="473.50" y="983.75" font-family="Liberation Sans" font-size="23" font-weight="bold" fill="#fcfcfc" textLength="253.03" lengthAdjust="spacingAndGlyphs">FLOPPY MODE (E-SEQ)</text>
<text x="378.00" y="1016.00" font-family="Liberation Sans" font-size="23" font-weight="bold" fill="#fcfcfc" textLength="442.45" lengthAdjust="spacingAndGlyphs">/dev/sdd - IBM 720K DD - USB - TEACV0.0</text>
</svg>
</body></html>
